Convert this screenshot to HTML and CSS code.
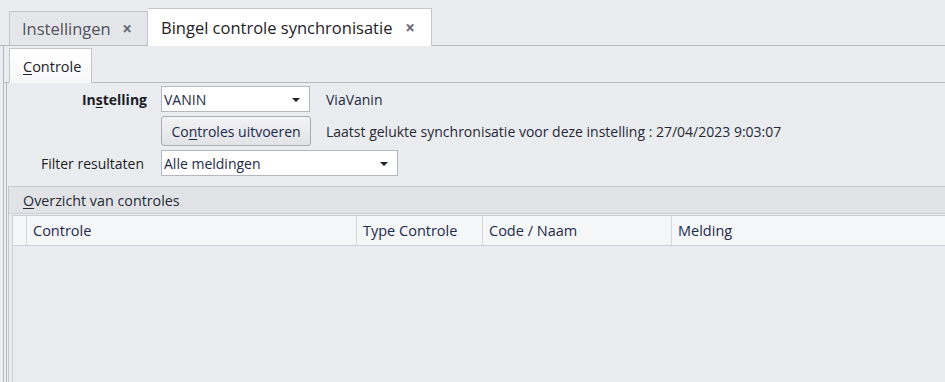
FILE: index.html
```html
<!DOCTYPE html>
<html lang="nl">
<head>
    <meta charset="UTF-8">
    <title>Bingel controle synchronisatie</title>
    <link rel="stylesheet" href="styles.css">
</head>
<body>

    <div class="doc-tabs">
        <div class="doc-tab tab-settings">Instellingen <span class="close">×</span></div>
        <div class="doc-tab tab-sync active">Bingel controle synchronisatie <span class="close">×</span></div>
    </div>

    <div class="doc-body">
        <div class="sub-tabs">
            <div class="sub-tab"><u>C</u>ontrole</div>
        </div>

        <div class="panel">
            <div class="form">
                <label class="lbl lbl-strong">In<u>s</u>telling</label>
                <div class="combo combo-small">VANIN<i class="arrow"></i></div>
                <span class="info">ViaVanin</span>

                <span></span>
                <button class="btn">Co<u>n</u>troles uitvoeren</button>
                <span class="info">Laatst gelukte synchronisatie voor deze instelling : 27/04/2023 9:03:07</span>

                <label class="lbl">Filter resultaten</label>
                <div class="combo combo-wide">Alle meldingen<i class="arrow"></i></div>
            </div>

            <div class="group">
                <div class="group-head"><u>O</u>verzicht van controles</div>
                <div class="grid">
                    <div class="grid-head">
                        <div class="cell cell-row"></div>
                        <div class="cell">Controle</div>
                        <div class="cell">Type Controle</div>
                        <div class="cell">Code / Naam</div>
                        <div class="cell">Melding</div>
                    </div>
                    <div class="grid-body"></div>
                </div>
            </div>
        </div>
    </div>

</body>
</html>
```

FILE: styles.css
```css
* {
    box-sizing: border-box;
}

html, body {
    height: 100%;
}

body {
    margin: 0;
    background: #ebecf0;
    font-family: 'Open Sans', 'Noto Sans', sans-serif;
    font-size: 14px;
    color: #262a36;
    display: flex;
    flex-direction: column;
    overflow: hidden;
}

u {
    text-decoration-thickness: 1px;
    text-underline-offset: 2px;
}

/* document tabs */
.doc-tabs {
    height: 46px;
    flex: none;
    display: flex;
    align-items: flex-end;
    padding-left: 9px;
    border-bottom: 1px solid #b6b9c0;
}

.doc-tab {
    height: 34px;
    display: flex;
    align-items: center;
    padding: 0 15px 0 12px;
    border: 1px solid #c3c5cb;
    border-bottom: 0;
    background: #e5e6ea;
    color: #50535c;
    font-size: 16.5px;
    white-space: nowrap;
}

.tab-settings {
    width: 139px;
}

.tab-sync {
    width: 284px;
    border-left: 0;
    padding-left: 13px;
    padding-right: 16px;
}

.doc-tab.active {
    height: 38px;
    margin-bottom: -1px;
    background: #fff;
    color: #1f2128;
}

.close {
    margin-left: auto;
    font-size: 17px;
    font-weight: 700;
    color: #6a6d75;
}

/* page body */
.doc-body {
    flex: 1;
    display: flex;
    flex-direction: column;
    margin-left: 3px;
    border-left: 1px solid #b6b9c0;
}

.sub-tabs {
    height: 37px;
    flex: none;
    display: flex;
    align-items: flex-end;
    padding-left: 5px;
    border-bottom: 1px solid #b6b9c0;
}

.sub-tab {
    width: 83px;
    height: 35px;
    margin-bottom: -1px;
    padding-left: 13px;
    display: flex;
    align-items: center;
    border: 1px solid #c3c5cb;
    border-bottom: 0;
    background: linear-gradient(#ffffff, #f7f7f9);
    font-size: 14.5px;
    color: #1f2128;
}

.panel {
    flex: 1;
    display: flex;
    flex-direction: column;
    margin-left: 2px;
    border-left: 1px solid #b6b9c0;
}

/* form */
.form {
    display: grid;
    grid-template-columns: 136px 154px 1fr;
    grid-template-rows: 26px 30px 26px;
    column-gap: 11px;
    row-gap: 4px;
    padding: 3px 0 0 7px;
    align-items: center;
}

.lbl {
    justify-self: end;
    padding-right: 6px;
    color: #1c1e24;
}

.lbl-strong {
    padding-right: 3px;
    font-weight: 700;
}

.combo {
    position: relative;
    height: 26px;
    display: flex;
    align-items: center;
    padding-left: 2px;
    background: #fff;
    border: 1px solid #b4b7be;
    color: #1c2a4c;
}

.combo-small {
    width: 149px;
}

.combo-wide {
    width: 237px;
    grid-column: 2 / 4;
}

.arrow {
    position: absolute;
    right: 9px;
    top: 11px;
    border-left: 4px solid transparent;
    border-right: 4px solid transparent;
    border-top: 4px solid #1f2128;
}

.btn {
    width: 150px;
    height: 30px;
    padding: 0;
    font: inherit;
    color: #1c2a4c;
    border: 1px solid #a9acb3;
    border-radius: 3px;
    background: linear-gradient(#f3f3f5, #e2e3e7);
}

.info {
    white-space: nowrap;
}

/* results group */
.group {
    flex: 1;
    display: flex;
    flex-direction: column;
    margin: 10px 0 0 1px;
    border-top: 1px solid #c6c8ce;
    border-left: 1px solid #c6c8ce;
}

.group-head {
    height: 27px;
    flex: none;
    display: flex;
    align-items: center;
    padding-left: 14px;
    background: #e2e3e7;
    border-bottom: 1px solid #cdcfd4;
    font-size: 14.3px;
}

.grid {
    flex: 1;
    margin: 1px 0 0 3px;
    border-top: 1px solid #cdcfd4;
    border-left: 1px solid #cdcfd4;
    display: flex;
    flex-direction: column;
}

.grid-head {
    display: grid;
    grid-template-columns: 14px 330px 126px 189px 1fr;
    height: 30px;
    background: #f5f6f8;
    border-bottom: 1px solid #cdcfd4;
}

.cell {
    display: flex;
    align-items: center;
    padding-left: 6px;
    border-right: 1px solid #d6d8dc;
    font-size: 14.5px;
    color: #1c2a4c;
}

.cell:last-child {
    border-right: 0;
}

.grid-body {
    flex: 1;
}
```
